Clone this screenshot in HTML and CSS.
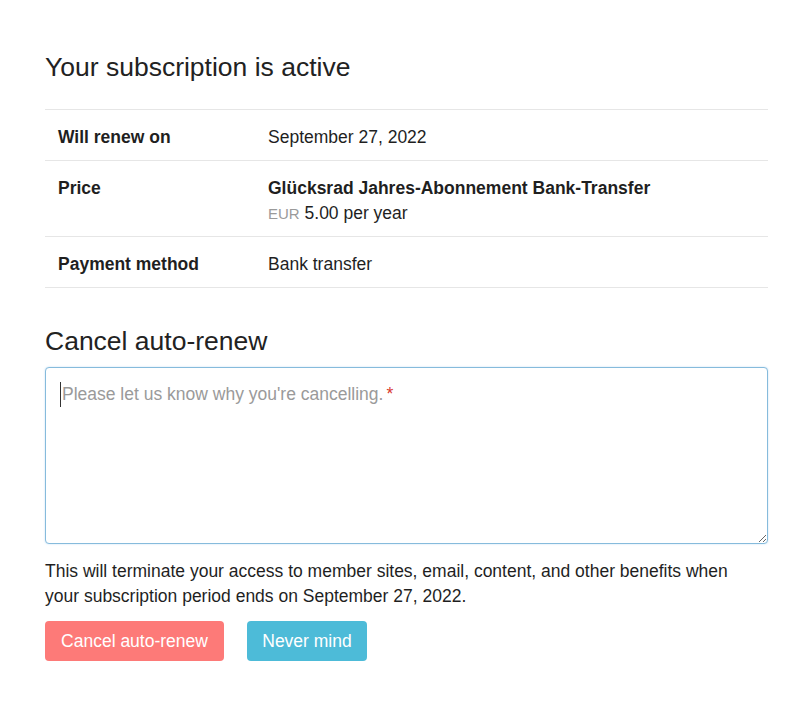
FILE: index.html
```html
<!DOCTYPE html>
<html>
<head>
<meta charset="utf-8">
<link rel="stylesheet" href="styles.css">
</head>
<body>
<main class="page">
  <h1 class="title">Your subscription is active</h1>
  <table class="details">
    <tr>
      <th>Will renew on</th>
      <td>September 27, 2022</td>
    </tr>
    <tr>
      <th>Price</th>
      <td><strong>Glücksrad Jahres-Abonnement Bank-Transfer</strong><br><span class="cur">EUR</span> 5.00 per year</td>
    </tr>
    <tr>
      <th>Payment method</th>
      <td>Bank transfer</td>
    </tr>
  </table>
  <h2 class="title cancel-title">Cancel auto-renew</h2>
  <div class="field">
    <textarea class="reason" aria-label="reason"></textarea>
    <span class="placeholder">Please let us know why you're cancelling.<span class="req">*</span></span>
  </div>
  <p class="note">This will terminate your access to member sites, email, content, and other benefits when your subscription period ends on September 27, 2022.</p>
  <div class="actions">
    <button class="btn btn-danger">Cancel auto-renew</button>
    <button class="btn btn-info">Never mind</button>
  </div>
</main>
</body>
</html>
```
FILE: styles.css
```css
html, body { margin: 0; padding: 0; background: #fff; }
body {
  font-family: "Liberation Sans", Arial, sans-serif;
  font-size: 17.5px;
  line-height: 25px;
  color: #1f1f1f;
}
.page {
  width: 723px;
  padding: 50px 0 0 45px;
}
.title {
  font-size: 26.5px;
  font-weight: normal;
  line-height: 34px;
  margin: 0 0 25px;
  color: #222;
}
.details {
  width: 100%;
  border-collapse: collapse;
  border-top: 1px solid #e6e6e6;
}
.details th, .details td {
  text-align: left;
  vertical-align: top;
  padding: 15px 13px 10px;
  border-bottom: 1px solid #e6e6e6;
}
.details th {
  width: 184px;
  font-weight: bold;
}
.cur { color: #9a9a9a; font-size: 15px; }
.cancel-title { margin: 36px 0 9px; }
.field { position: relative; }
.reason {
  display: block;
  box-sizing: border-box;
  width: 723px;
  height: 177px;
  margin: 0;
  border: 1px solid #86bbdc;
  border-radius: 4px;
  font: inherit;
  resize: vertical;
  box-shadow: 0 0 2px rgba(102,175,233,0.4);
}
.placeholder {
  position: absolute;
  left: 15px;
  top: 15px;
  color: #9a9a9a;
  border-left: 1px solid #333;
  padding-left: 1px;
  pointer-events: none;
}
.req { color: #d9392f; margin-left: 3px; }
.note { margin: 15px 0 12px; width: 712px; }
.actions { display: flex; gap: 23px; }
.btn {
  font: inherit;
  font-size: 17.5px;
  color: #fff;
  border: 0;
  border-radius: 4px;
  height: 40px;
  padding: 0;
  white-space: nowrap;
}
.btn-danger { background: #fd7a78; width: 179px; }
.btn-info { background: #4dbbd8; width: 120px; }
```
